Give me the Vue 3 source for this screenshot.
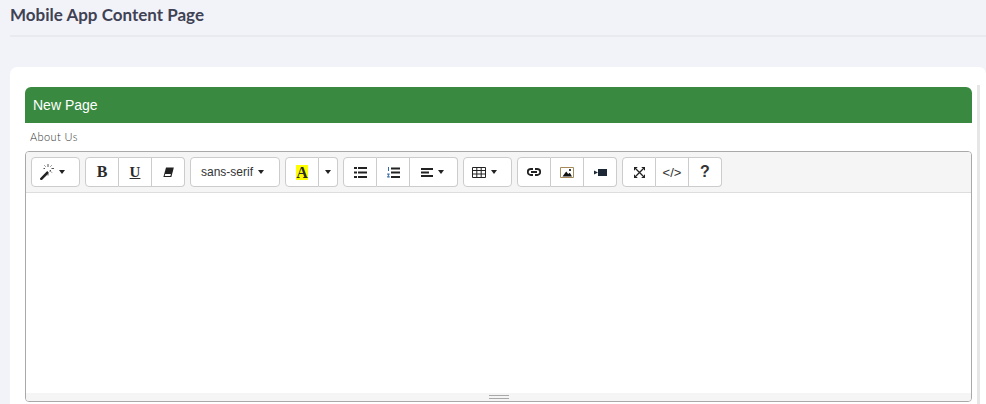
<script setup>
</script>

<template>
  <div class="page">
    <h1 class="title">Mobile App Content Page</h1>
    <div class="rule"></div>
    <div class="card">
      <div class="track"></div>
      <div class="panel">
        <div class="head">New Page</div>
        <div class="label">About Us</div>
        <div class="editor">
          <div class="toolbar">
            <div class="group">
              <button class="btn w49 shift">
                <svg width="14" height="16" viewBox="0 0 14 16"><path d="M.4 13.900 7.200 7.100l1.800 1.800-6.800 6.800a1.200 1.200 0 0 1-1.800-1.800z" fill="#222"/><path d="M9.300 7.100 10.500 5.900 11.200 6.600 10 7.800z" fill="#222"/><path d="M8 0v3M8 10v1.500M11.500 4.500h2.500M3.500 4.500h1.500M11.500 1.500l-1 1M11.800 8.500l-1-1M4.500 1.500l1 1" stroke="#555" stroke-width="1" fill="none"/></svg>
                <i class="caret"></i>
              </button>
            </div>
            <div class="group">
              <button class="btn w34 serif b">B</button>
              <button class="btn w33 serif u">U</button>
              <button class="btn w33">
                <svg width="11" height="11" viewBox="0 0 11 11"><path d="M3 .5H10.800L8.400 10H.4z" fill="#222"/><path d="M2.200 7H7.900L7.400 8.900H1.700z" fill="#fff"/></svg>
              </button>
            </div>
            <div class="group">
              <button class="btn w90 sans">sans-serif<i class="caret c6"></i></button>
            </div>
            <div class="group">
              <button class="btn w34 serif"><span class="hl">A</span></button>
              <button class="btn w19"><i class="caret"></i></button>
            </div>
            <div class="group">
              <button class="btn w34">
                <svg width="13" height="11" viewBox="0 0 13 11"><path d="M0 0h3v2H0zM4 0h9v2H4zM0 4.500h3v2H0zM4 4.500h9v2H4zM0 9h3v2H0zM4 9h9v2H4z" fill="#222"/></svg>
              </button>
              <button class="btn w33">
                <svg width="13" height="11" viewBox="0 0 13 11"><path d="M4 .5h9v2H4zM4 4.500h9v2H4zM4 9h9v2H4z" fill="#222"/><path d="M1 0h1v4H1zM.2 6.500h2.400v1L1.400 9.300h1.300V10.500H.2v-1l1.300-1.800H.2z" fill="#36a"/></svg>
              </button>
              <button class="btn w48 shift1">
                <svg width="12" height="9" viewBox="0 0 12 9"><path d="M0 0h12v2H0zM0 3.500h8v2H0zM0 7h12v2H0z" fill="#222"/></svg>
                <i class="caret"></i>
              </button>
            </div>
            <div class="group">
              <button class="btn w49 shift">
                <svg width="14" height="11" viewBox="0 0 14 11" fill="none" stroke="#222" stroke-width="1"><path d="M.5.500h13v10H.5zM.5 3.500h13M.5 7h13M4.800.5v10M9.200.5v10"/></svg>
                <i class="caret"></i>
              </button>
            </div>
            <div class="group">
              <button class="btn w34">
                <svg width="14" height="8" viewBox="0 0 14 8" fill="none" stroke="#222" stroke-width="1.800"><path d="M6 1H3.800a3 3 0 0 0 0 6H6M8 1h2.200a3 3 0 0 1 0 6H8M4 4h6"/></svg>
              </button>
              <button class="btn w33">
                <svg width="14" height="11" viewBox="0 0 14 11"><path d="M.5.500h13v10H.5z" fill="none" stroke="#a88a5a"/><path d="M2.500 9.500 6.200 4.500l2 2.500 1.600-1.300L12 9.500z" fill="#111"/><circle cx="10" cy="3" r="1.100" fill="#111"/></svg>
              </button>
              <button class="btn w33">
                <svg width="13" height="7" viewBox="0 0 13 7"><path d="M0 1.500 4 3.500 0 5.500z" fill="#1c2836"/><path d="M4 0h9v7H4z" fill="#1c2836"/></svg>
              </button>
            </div>
            <div class="group">
              <button class="btn w34">
                <svg width="11" height="11" viewBox="0 0 11 11" fill="none" stroke="#222" stroke-width="1.300"><path d="M2 2l7 7M9 2 2 9"/><path d="M0 0h3.800L0 3.800zM11 0v3.800L7.200 0zM0 11V7.200L3.800 11zM11 11H7.200L11 7.200z" fill="#222" stroke="none"/></svg>
              </button>
              <button class="btn w33 code">&lt;/&gt;</button>
              <button class="btn w33 help">?</button>
            </div>
          </div>
          <div class="body"></div>
          <div class="status">
            <div class="grip"></div>
          </div>
        </div>
      </div>
    </div>
  </div>
</template>

<style>
html, body { margin: 0; background: #f2f3f8; overflow: hidden; }
</style>

<style scoped>
.page {
  width: 986px;
  height: 404px;
  box-sizing: border-box;
  padding-left: 10px;
  overflow: hidden;
  background: #f2f3f8;
}
.title {
  margin: 0;
  height: 35px;
  padding-top: 4px;
  box-sizing: border-box;
  font: 700 17px/22px Lato, sans-serif;
  color: #3f4254;
}
.rule {
  height: 2px;
  background: #e9eaef;
}
.card {
  position: relative;
  margin-top: 30px;
  height: 340px;
  background: #fff;
  border-radius: 7px 7px 0 0;
  padding: 20px 14px 0 15px;
  box-sizing: border-box;
}
.track {
  position: absolute;
  left: 967px;
  top: 18px;
  bottom: 0;
  width: 3px;
  background: #e6e6e6;
}
.panel {
  width: 947px;
}
.head {
  height: 36px;
  background: #3a8940;
  border-radius: 6px 6px 0 0;
  color: #fff;
  font: 400 14px/36px "Liberation Sans", Arial, sans-serif;
  padding-left: 8px;
}
.label {
  height: 28px;
  padding-left: 5px;
  font: 300 11px/28px Lato, sans-serif;
  letter-spacing: 0.4px;
  color: #333;
}
.editor {
  height: 251px;
  box-sizing: border-box;
  border: 1px solid #a9a9a9;
  border-radius: 4px;
  display: flex;
  flex-direction: column;
  overflow: hidden;
}
.toolbar {
  height: 41px;
  box-sizing: border-box;
  flex: none;
  display: flex;
  gap: 5px;
  padding: 5px 0 0 5px;
  background: #f5f5f5;
  border-bottom: 1px solid #ddd;
}
.group {
  display: flex;
  height: 30px;
}
.btn {
  margin: 0;
  padding: 0;
  height: 30px;
  box-sizing: border-box;
  background: #fff;
  border: 1px solid #ccc;
  border-left-width: 0;
  display: flex;
  align-items: center;
  justify-content: center;
  color: #333;
  font: 400 12px/1 "Liberation Sans", Arial, sans-serif;
}
.btn:first-child {
  border-left-width: 1px;
  border-radius: 4px 0 0 4px;
}
.btn:last-child {
  border-radius: 0 4px 4px 0;
}
.btn:only-child {
  border-radius: 4px;
}
.w19 { width: 19px; }
.w33 { width: 33px; }
.w34 { width: 34px; }
.w48 { width: 48px; }
.w49 { width: 49px; }
.w90 { width: 90px; }
.shift { padding-right: 6px; }
.shift1 { padding-right: 2px; }
.caret {
  display: block;
  width: 0;
  height: 0;
  margin-left: 5px;
  border-left: 3px solid transparent;
  border-right: 3px solid transparent;
  border-top: 4px solid #222;
}
.w19 .caret { margin-left: 0; }
.serif {
  font: 700 15px/1 "Liberation Serif", "Times New Roman", serif;
  color: #2b2b2b;
}
.b { font-size: 16px; }
.u { text-decoration: underline; }
.sans {
  justify-content: flex-start;
  padding-left: 10px;
  font-size: 12px;
  color: #333;
}
.hl {
  display: block;
  width: 12px;
  height: 15px;
  background: #ff0;
  text-align: center;
  font-size: 16px;
  line-height: 15px;
}
.code { font-size: 13px; color: #333; }
.help {
  font: 700 16px/1 "Liberation Sans", Arial, sans-serif;
  color: #333;
}
.body {
  flex: 1;
  background: #fff;
}
.status {
  flex: none;
  height: 8px;
  background: #f5f5f5;
  display: flex;
  justify-content: center;
}
.grip {
  width: 20px;
  height: 5px;
  margin-top: 2px;
  border-top: 1px solid #a9a9a9;
  border-bottom: 1px solid #a9a9a9;
}
.grip::after {
  content: "";
  display: block;
  height: 1px;
  margin-top: 2px;
  background: #a9a9a9;
}
</style>
